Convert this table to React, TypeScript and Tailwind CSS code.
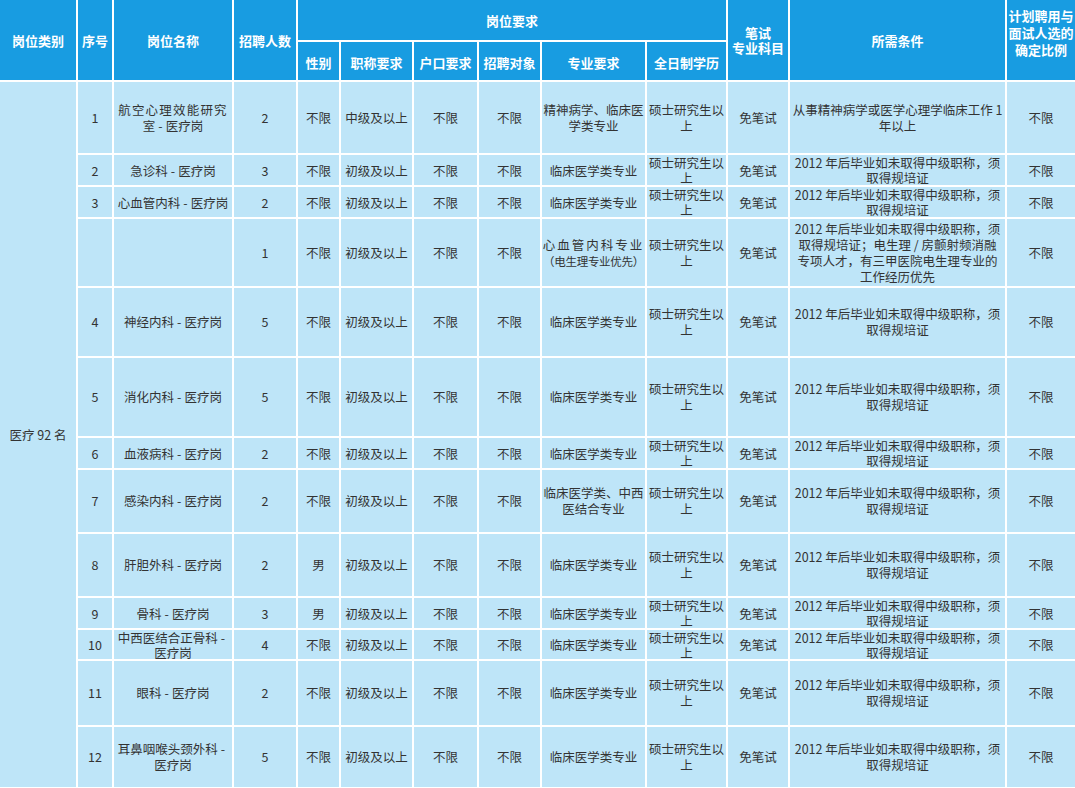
import type { ReactNode } from "react";

type Row = {
  seq: string;
  name: ReactNode;
  count: string;
  gender: string;
  title: string;
  hukou: string;
  target: string;
  major: ReactNode;
  edu: ReactNode;
  exam: string;
  cond: ReactNode;
  ratio: string;
  tight?: boolean;
};

// short dash between department and post, like the source table's narrow "－"
const D = "\u2005-\u2005";

const std = (
  <>
    2012 年后毕业如未取得中级职称，须
    <br />
    取得规培证
  </>
);

const master = (
  <>
    硕士研究生以
    <br />上
  </>
);

function row(seq: string, name: ReactNode, count: string, gender = "不限", major: ReactNode = "临床医学类专业"): Row {
  return {
    seq,
    name,
    count,
    gender,
    title: "初级及以上",
    hukou: "不限",
    target: "不限",
    major,
    edu: master,
    exam: "免笔试",
    cond: std,
    ratio: "不限",
  };
}

const rows: Row[] = [
  {
    ...row(
      "1",
      <>
        <span className="tracking-[1.2px]">航空心理效能研究</span>
        <br />
        室{D}医疗岗
      </>,
      "2",
      "不限",
      <>
        精神病学、临床医
        <br />
        学类专业
      </>
    ),
    title: "中级及以上",
    cond: (
      <>
        从事精神病学或医学心理学临床工作 1
        <br />
        年以上
      </>
    ),
  },
  { ...row("2", `急诊科${D}医疗岗`, "3"), tight: true },
  { ...row("3", `心血管内科${D}医疗岗`, "2"), tight: true },
  {
    ...row(
      "",
      "",
      "1",
      "不限",
      <>
        <span className="tracking-[2px]">心血管内科专业</span>
        <br />
        <span className="text-[11.5px] tracking-[-0.3px]">（电生理专业优先）</span>
      </>
    ),
    cond: (
      <>
        2012 年后毕业如未取得中级职称，须
        <br />
        取得规培证；电生理 / 房颤射频消融
        <br />
        专项人才，有三甲医院电生理专业的
        <br />
        工作经历优先
      </>
    ),
  },
  row("4", `神经内科${D}医疗岗`, "5"),
  row("5", `消化内科${D}医疗岗`, "5"),
  { ...row("6", `血液病科${D}医疗岗`, "2"), tight: true },
  row(
    "7",
    `感染内科${D}医疗岗`,
    "2",
    "不限",
    <>
      临床医学类、中西
      <br />
      医结合专业
    </>
  ),
  row("8", `肝胆外科${D}医疗岗`, "2", "男"),
  { ...row("9", `骨科${D}医疗岗`, "3", "男"), tight: true },
  {
    ...row(
      "10",
      <>
        中西医结合正骨科{D}
        <br />
        医疗岗
      </>,
      "4"
    ),
    tight: true,
  },
  row("11", `眼科${D}医疗岗`, "2"),
  row(
    "12",
    <>
      耳鼻咽喉头颈外科{D}
      <br />
      医疗岗
    </>,
    "5"
  ),
];

function Head({ children, className = "" }: { children: ReactNode; className?: string }) {
  return (
    <div
      className={
        "flex items-center justify-center bg-[#189ce1] text-center text-[13px] font-bold leading-[15px] text-white " +
        className
      }
    >
      <div>{children}</div>
    </div>
  );
}

function Cell({ children, tight, className = "" }: { children: ReactNode; tight?: boolean; className?: string }) {
  return (
    <div
      className={
        "flex items-center justify-center overflow-visible whitespace-nowrap bg-[#bee5f8] text-center text-[12.5px] text-[#333] " +
        (tight ? "leading-[15px] " : "leading-[16px] ") +
        className
      }
    >
      <div>{children}</div>
    </div>
  );
}

export default function App() {
  return (
    <div className="h-[788px] w-[1075px] overflow-hidden bg-white font-['Noto_Sans_CJK_SC','Noto_Sans',sans-serif]">
      <div className="grid grid-cols-[76px_34px_118px_62px_41px_71px_63px_61px_103px_79px_60px_215px_68px] grid-rows-[40px_38px_71px_30px_30px_67px_68px_78px_30px_62px_62px_30px_29px_64px_60px] gap-[2px] bg-white">
        <Head className="row-span-2">岗位类别</Head>
        <Head className="row-span-2">序号</Head>
        <Head className="row-span-2">岗位名称</Head>
        <Head className="row-span-2">招聘人数</Head>
        <Head className="col-span-6">岗位要求</Head>
        <Head className="row-span-2">
          笔试
          <br />
          专业科目
        </Head>
        <Head className="row-span-2">所需条件</Head>
        <Head className="row-span-2 pb-[16px] leading-[17px]">
          计划聘用与
          <br />
          面试人选的
          <br />
          确定比例
        </Head>
        <Head className="pt-[2px]">性别</Head>
        <Head className="pt-[2px]">职称要求</Head>
        <Head className="pt-[2px]">户口要求</Head>
        <Head className="pt-[2px]">招聘对象</Head>
        <Head className="pt-[2px]">专业要求</Head>
        <Head className="pt-[2px]">全日制学历</Head>

        <Cell className="row-span-13">医疗 92 名</Cell>
        {rows.map((r, i) => (
          <div key={i} className="contents">
            <Cell tight={r.tight}>{r.seq}</Cell>
            <Cell tight={r.tight}>{r.name}</Cell>
            <Cell tight={r.tight}>{r.count}</Cell>
            <Cell tight={r.tight}>{r.gender}</Cell>
            <Cell tight={r.tight}>{r.title}</Cell>
            <Cell tight={r.tight}>{r.hukou}</Cell>
            <Cell tight={r.tight}>{r.target}</Cell>
            <Cell tight={r.tight}>{r.major}</Cell>
            <Cell tight={r.tight}>{r.edu}</Cell>
            <Cell tight={r.tight}>{r.exam}</Cell>
            <Cell tight={r.tight}>{r.cond}</Cell>
            <Cell tight={r.tight}>{r.ratio}</Cell>
          </div>
        ))}
      </div>
    </div>
  );
}
